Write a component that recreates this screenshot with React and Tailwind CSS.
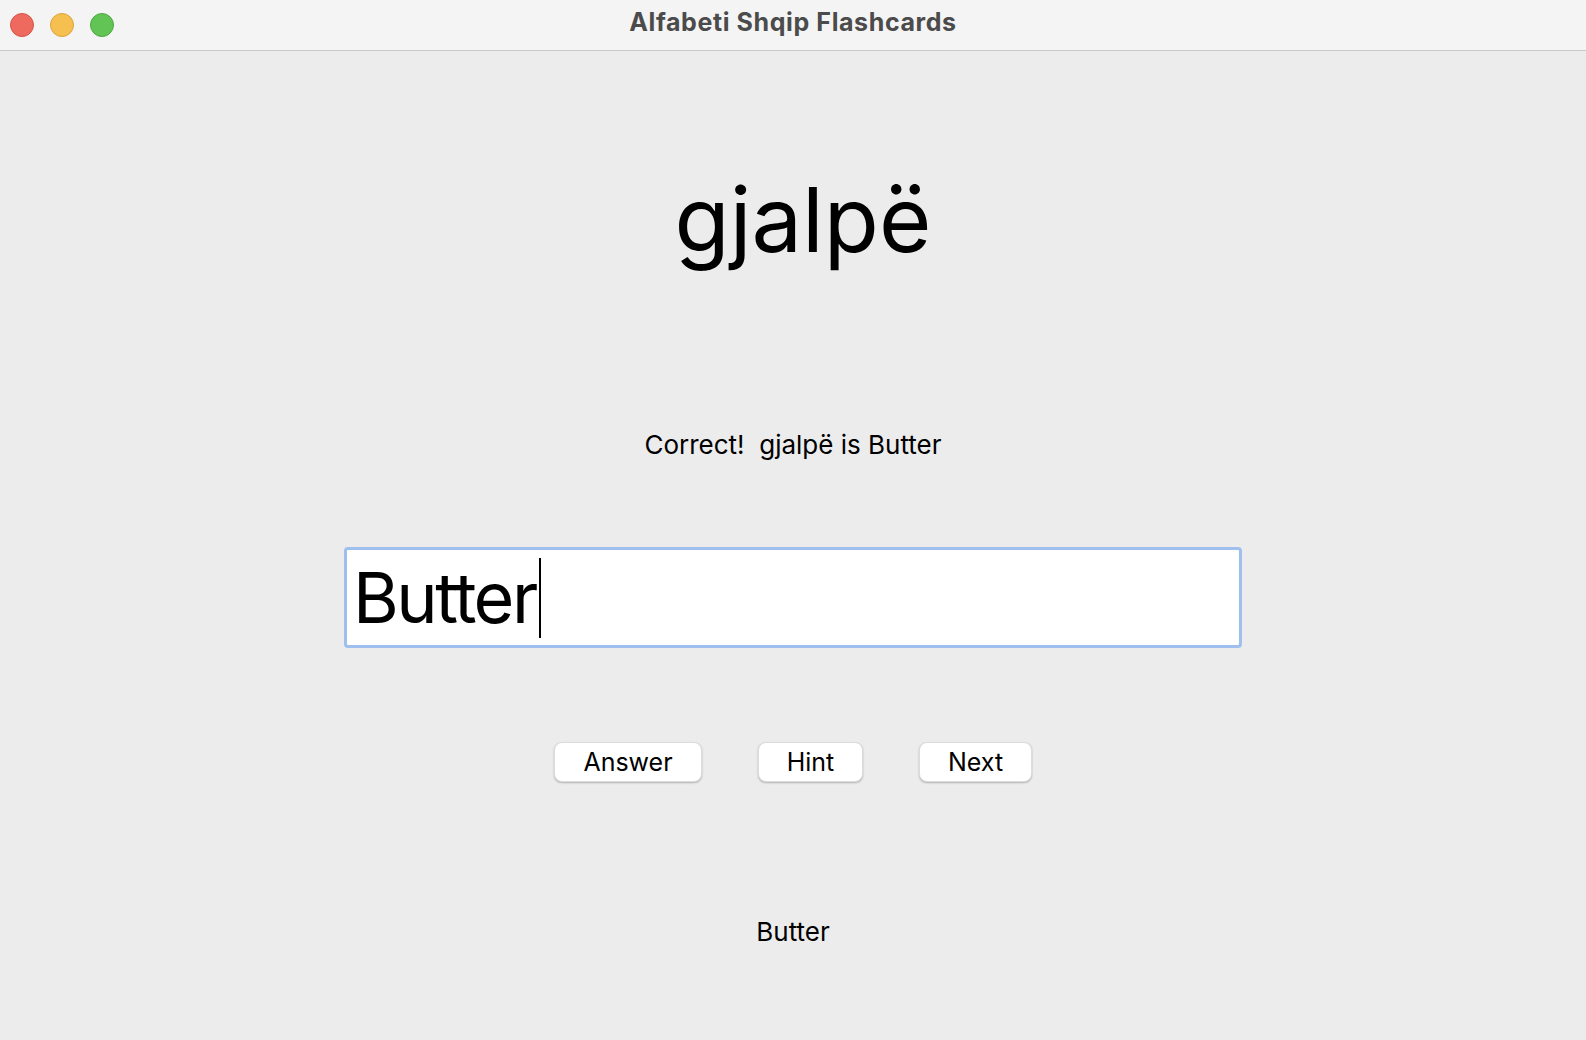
import React from "react";

const font = { fontFamily: "Inter, 'Noto Sans', 'Liberation Sans', sans-serif" };

function TrafficLights() {
  return (
    <div className="flex items-center gap-[16px] pl-[10px]">
      <span className="w-[24px] h-[24px] rounded-full bg-[#ee6a5f] border border-[#d55448]" />
      <span className="w-[24px] h-[24px] rounded-full bg-[#f6c050] border border-[#dca23b]" />
      <span className="w-[24px] h-[24px] rounded-full bg-[#61c454] border border-[#4ea941]" />
    </div>
  );
}

export default function App() {
  return (
    <div
      className="w-[1586px] h-[1040px] bg-[#ececec] flex flex-col text-black overflow-hidden"
      style={font}
    >
      {/* Title bar */}
      <div className="relative h-[51px] shrink-0 bg-[#f4f4f4] border-b border-[#c9c9c9] flex items-center">
        <TrafficLights />
        <div className="absolute inset-0 flex items-center justify-center text-[25px] tracking-[0.6px] font-bold text-[#4b4b4b] pb-[4px]">
          Alfabeti Shqip Flashcards
        </div>
      </div>

      <div className="flex flex-col items-center">
        <div className="mt-[124px] ml-[20px] text-[90px] leading-none">gjalpë</div>

        <div className="mt-[167px] text-[26px] leading-none whitespace-pre">
          Correct!  gjalpë is Butter
        </div>

        <div className="mt-[89px] w-[898px] h-[101px] bg-white border-[3px] border-[#9fc0ee] rounded-[4px] flex items-center pl-[6px]">
          <span className="text-[70px] leading-none tracking-[-2.5px]">Butter</span>
          <span className="w-[2px] h-[80px] bg-black ml-[3px]" />
        </div>

        <div className="mt-[94px] flex gap-[56px]">
          <button className="w-[148px] h-[40px] bg-white rounded-[8px] shadow-[0_1px_2px_rgba(0,0,0,0.25)] border border-[#dcdcdc] text-[25px] leading-none">
            Answer
          </button>
          <button className="w-[105px] h-[40px] bg-white rounded-[8px] shadow-[0_1px_2px_rgba(0,0,0,0.25)] border border-[#dcdcdc] text-[25px] leading-none">
            Hint
          </button>
          <button className="w-[113px] h-[40px] bg-white rounded-[8px] shadow-[0_1px_2px_rgba(0,0,0,0.25)] border border-[#dcdcdc] text-[25px] leading-none">
            Next
          </button>
        </div>

        <div className="mt-[137px] text-[26px] leading-none">Butter</div>
      </div>
    </div>
  );
}
